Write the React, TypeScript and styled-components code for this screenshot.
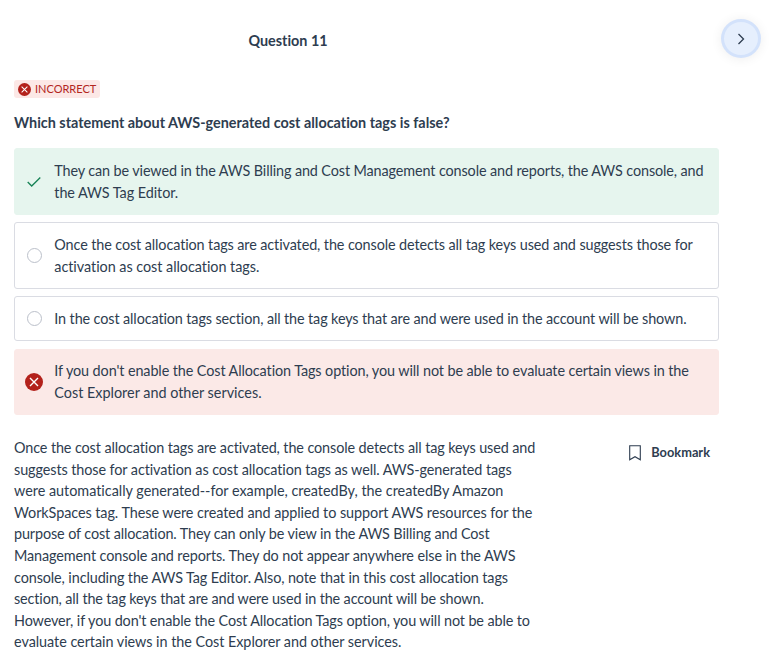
import React from "react";
import styled, { createGlobalStyle } from "styled-components";

type State = "correct" | "plain" | "wrong";
type TextLine = { text: string; tracking: number };

const GlobalStyle = createGlobalStyle`
  * { box-sizing: border-box; }
  body { margin: 0; background: #fff; color: #2e3d50; font: 14.4px/22px Lato, sans-serif; font-variant-ligatures: none; }
`;
const Page = styled.main`width: 772px; height: 661px; padding: 19px 11px 0 14px; overflow: hidden;`;
const Header = styled.header`display: flex; align-items: center; justify-content: space-between; height: 40px;`;
const Heading = styled.h1`margin: 3px 0 0; width: 548px; text-align: center; font-size: 14.4px; font-weight: 700; line-height: 22px;`;
const NextButton = styled.button`
  display: grid; place-items: center; width: 40px; height: 39px; padding: 0; margin-bottom: 1px;
  border: 3px solid #d3e2fb; border-radius: 50%; background: #e6effd; color: #2e3d50;
  box-shadow: 0 1px 12px rgba(0, 0, 0, 0.07);
`;
const Status = styled.div`
  display: flex; align-items: center; gap: 4px; width: 86px; height: 18px; margin-top: 21px; padding-left: 4px;
  border-radius: 3px; background: #fce8e6; color: #b3261e; font-size: 11px; line-height: 18px;
`;
const Question = styled.h2`margin: 14px 0 14px; font-size: 14.4px; line-height: 22px; font-weight: 700;`;
const Answers = styled.div`display: flex; flex-direction: column; justify-content: space-between; width: 705px; height: 267px;`;
const backgrounds: Record<State, string> = { correct: "#e6f5ee", plain: "#fff", wrong: "#fbe9e7" };
const Answer = styled.div<{ $state: State; $height: number }>`
  display: flex; align-items: center; height: ${p => p.$height}px; border-radius: 3px;
  margin-top: ${p => p.$state === "wrong" ? 1 : 0}px;
  border: 1px solid ${p => p.$state === "plain" ? "#dadce3" : backgrounds[p.$state]};
  background: ${p => backgrounds[p.$state]};
`;
const Marker = styled.span<{ $state: State }>`
  display: flex; align-items: center; justify-content: center; width: 39px; flex: none;
  padding-right: ${p => p.$state === "plain" ? 0 : 2}px;
`;
const Radio = styled.span`width: 15px; height: 15px; border: 1px solid #bbc0ca; border-radius: 50%;`;
const AnswerText = styled.span`white-space: nowrap; padding-left: 0.3px;`;
const Line = styled.span<{ $tracking: number }>`display: block; letter-spacing: ${p => p.$tracking}px;`;
const Footer = styled.section`display: flex; justify-content: space-between; width: 705px; margin-top: 22px;`;
const Explanation = styled.p`margin: 0; font-size: 14.4px; line-height: 21.6px; white-space: nowrap;`;
const Bookmark = styled.button`
  display: flex; align-items: center; gap: 10px; height: 22px; margin: 4px 9px 0 0; padding: 0; border: 0;
  background: none; color: #2e3d50; font: 700 12.8px/22px Lato, sans-serif;
`;
const BookmarkIcon = styled.svg`margin-top: 2px;`;

const ErrorIcon = ({ size }: { size: number }) => (
  <svg width={size} height={size} viewBox="0 0 18 18"><circle cx="9" cy="9" r="9" fill="#b3211b" /><path d="m5 5 8 8m0-8-8 8" stroke="#fff" strokeWidth="1.4" /></svg>
);
const Check = () => <svg width="14" height="12" viewBox="0 0 14 12"><path d="m.7 6 4 4L13.3 1.5" fill="none" stroke="#168255" strokeWidth="1.3" /></svg>;

const answers: { state: State; height: number; lines: TextLine[] }[] = [
  { state: "correct", height: 67, lines: [
    { text: "They can be viewed in the AWS Billing and Cost Management console and reports, the AWS console, and", tracking: -0.113 },
    { text: "the AWS Tag Editor.", tracking: -0.06 },
  ] },
  { state: "plain", height: 67, lines: [
    { text: "Once the cost allocation tags are activated, the console detects all tag keys used and suggests those for", tracking: -0.103 },
    { text: "activation as cost allocation tags.", tracking: -0.04 },
  ] },
  { state: "plain", height: 45, lines: [
    { text: "In the cost allocation tags section, all the tag keys that are and were used in the account will be shown.", tracking: -0.113 },
  ] },
  { state: "wrong", height: 66, lines: [
    { text: "If you don't enable the Cost Allocation Tags option, you will not be able to evaluate certain views in the", tracking: -0.097 },
    { text: "Cost Explorer and other services.", tracking: 0 },
  ] },
];
const explanation: TextLine[] = [
  { text: "Once the cost allocation tags are activated, the console detects all tag keys used and", tracking: -0.107 },
  { text: "suggests those for activation as cost allocation tags as well. AWS-generated tags", tracking: -0.085 },
  { text: "were automatically generated--for example, createdBy, the createdBy Amazon", tracking: -0.014 },
  { text: "WorkSpaces tag. These were created and applied to support AWS resources for the", tracking: -0.06 },
  { text: "purpose of cost allocation. They can only be view in the AWS Billing and Cost", tracking: -0.114 },
  { text: "Management console and reports. They do not appear anywhere else in the AWS", tracking: -0.096 },
  { text: "console, including the AWS Tag Editor. Also, note that in this cost allocation tags", tracking: -0.1 },
  { text: "section, all the tag keys that are and were used in the account will be shown.", tracking: -0.13 },
  { text: "However, if you don't enable the Cost Allocation Tags option, you will not be able to", tracking: -0.116 },
  { text: "evaluate certain views in the Cost Explorer and other services.", tracking: -0.04 },
];
const Lines = ({ lines }: { lines: TextLine[] }) => <>{lines.map(line => <Line key={line.text} $tracking={line.tracking}>{line.text}</Line>)}</>;

export default function App() {
  return <><GlobalStyle /><Page>
    <Header><Heading>Question 11</Heading><NextButton aria-label="Next question"><svg width="8" height="12" viewBox="0 0 8 12"><path d="m1.5 1 5 5-5 5" fill="none" stroke="currentColor" strokeWidth="1.3" /></svg></NextButton></Header>
    <Status><ErrorIcon size={13} />INCORRECT</Status>
    <Question>Which statement about AWS-generated cost allocation tags is false?</Question>
    <Answers>{answers.map(a => <Answer key={a.lines[0].text} $state={a.state} $height={a.height}>
      <Marker $state={a.state}>{a.state === "correct" ? <Check /> : a.state === "wrong" ? <ErrorIcon size={18} /> : <Radio />}</Marker>
      <AnswerText><Lines lines={a.lines} /></AnswerText>
    </Answer>)}</Answers>
    <Footer><Explanation><Lines lines={explanation} /></Explanation><Bookmark><BookmarkIcon width="12" height="16" viewBox="0 0 12 16"><path d="M.7.7h10.6v14L6 11.7.7 14.7z" fill="none" stroke="currentColor" strokeWidth="1.1" /></BookmarkIcon>Bookmark</Bookmark></Footer>
  </Page></>;
}
